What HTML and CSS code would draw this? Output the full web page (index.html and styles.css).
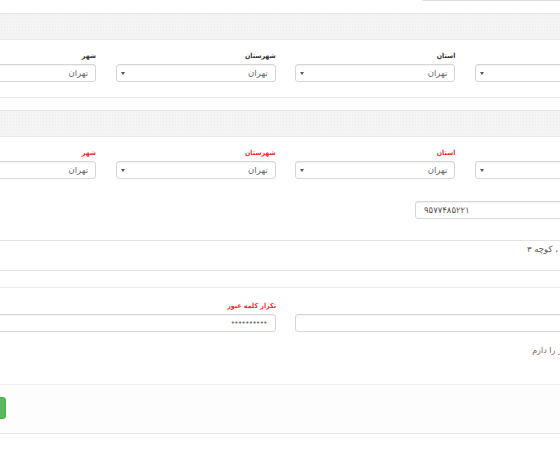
FILE: index.html
```html
<!DOCTYPE html>
<html lang="fa" dir="ltr">
<head>
<meta charset="utf-8">
<title>فرم ثبت نام</title>
<link rel="stylesheet" href="styles.css">
</head>
<body>
<div class="page">
  <div class="top-row"><div class="top-input"></div></div>

  <div class="band"></div>
  <div class="grid4 fields">
    <div class="field">
      <div class="label">&nbsp;</div>
      <div class="select"><span class="val"></span><span class="caret"></span></div>
    </div>
    <div class="field">
      <div class="label">استان</div>
      <div class="select"><span class="val">تهران</span><span class="caret"></span></div>
    </div>
    <div class="field">
      <div class="label">شهرستان</div>
      <div class="select"><span class="val">تهران</span><span class="caret"></span></div>
    </div>
    <div class="field">
      <div class="label">شهر</div>
      <div class="select"><span class="val">تهران</span><span class="caret"></span></div>
    </div>
  </div>
  <div class="hr hr-1"></div>

  <div class="band band-2"></div>
  <div class="grid4 fields">
    <div class="field">
      <div class="label req">&nbsp;</div>
      <div class="select"><span class="val"></span><span class="caret"></span></div>
    </div>
    <div class="field">
      <div class="label req">استان</div>
      <div class="select"><span class="val">تهران</span><span class="caret"></span></div>
    </div>
    <div class="field">
      <div class="label req">شهرستان</div>
      <div class="select"><span class="val">تهران</span><span class="caret"></span></div>
    </div>
    <div class="field">
      <div class="label req">شهر</div>
      <div class="select"><span class="val">تهران</span><span class="caret"></span></div>
    </div>
  </div>

  <div class="grid12 phone-row">
    <div class="col4"><div class="input ltr">۹۵۷۷۴۸۵۲۲۱</div></div>
  </div>

  <div class="address">تهران ، خیابان آزادی ، کوچه ۳</div>
  <div class="hr hr-2"></div>

  <div class="grid2 pass-row">
    <div class="field">
      <div class="label req">کلمه عبور</div>
      <div class="input"></div>
    </div>
    <div class="field">
      <div class="label req">تکرار کلمه عبور</div>
      <div class="input pass">••••••••••</div>
    </div>
  </div>

  <div class="check-row"><span class="box"></span><span class="check-text">قوانین سایت و مجوز را دارم</span></div>

  <div class="footer">
    <div class="btn">ثبت نام</div>
  </div>
</div>
</body>
</html>
```
FILE: styles.css
```css
html, body {
  margin: 0;
  padding: 0;
  background: #ffffff;
  overflow: hidden;
}
body {
  font-family: "DejaVu Sans", "Noto Sans", sans-serif;
  font-size: 8px;
  color: #555;
}
.page {
  width: 800px;
  margin-left: -120px;
  direction: rtl;
}
.top-row {
  padding: 0 45px 0 56px;
  display: flex;
}
.top-input {
  width: 212px;
  height: 16px;
  margin-top: -17px;
  border: 1px solid #dcdcdc;
  border-radius: 3px;
}
.band {
  margin-top: 12px;
  height: 25px;
  border-top: 1px solid #e6e6e6;
  border-bottom: 1px solid #e9e9e9;
  background-color: #f4f4f4;
  background-image: radial-gradient(circle, #ececec 0.6px, transparent 0.9px);
  background-size: 3px 3px;
}
.grid4 {
  display: grid;
  grid-template-columns: repeat(4, 160px);
  column-gap: 19.67px;
  padding: 0 45px 0 56px;
}
.fields {
  padding-top: 10px;
}
.label {
  height: 14px;
  line-height: 13px;
  font-family: "DejaVu Sans Condensed", "DejaVu Sans", sans-serif;
  font-stretch: condensed;
  font-weight: bold;
  color: #333;
  font-size: 7px;
  white-space: nowrap;
}
.label.req {
  color: #ee2f2f;
}
.select, .input {
  box-sizing: border-box;
  height: 18px;
  border: 1px solid #d6d6d6;
  border-radius: 3px;
  box-shadow: inset 0 1px 1px rgba(0,0,0,0.05);
  display: flex;
  align-items: center;
  justify-content: space-between;
  padding: 0 7px 0 4px;
  color: #666;
  font-size: 8.5px;
  white-space: nowrap;
}
.caret {
  width: 0;
  height: 0;
  border-top: 3px solid #555;
  border-left: 2px solid transparent;
  border-right: 2px solid transparent;
}
.hr {
  height: 0;
  border-top: 1px solid #e8e8e8;
}
.hr-1 {
  margin-top: 15px;
}
.band-2 {
  margin-top: 12px;
}
.grid12 {
  display: grid;
  grid-template-columns: 220px;
  padding: 0 45px 0 56px;
}
.phone-row {
  margin-top: 22px;
}
.input.ltr {
  direction: ltr;
  justify-content: flex-start;
  padding: 0 8px;
  color: #555;
}
.address {
  margin-top: 21px;
  height: 26px;
  border-top: 1px solid #e4e4e4;
  border-bottom: 1px solid #e4e4e4;
  padding: 3px 48px 0 0;
  line-height: 11px;
  color: #555;
  font-size: 8.5px;
  white-space: nowrap;
  overflow: hidden;
}
.hr-2 {
  margin-top: 16px;
  border-top: 1px solid #ebebeb;
}
.grid2 {
  display: grid;
  grid-template-columns: 340px 340px;
  column-gap: 19px;
  padding: 0 45px 0 56px;
}
.pass-row {
  padding-top: 12px;
}
.input.pass {
  justify-content: flex-start;
  padding: 0 8px;
  letter-spacing: -0.5px;
  color: #666;
  font-size: 7px;
}
.check-row {
  margin-top: 13px;
  height: 12px;
  line-height: 12px;
  display: flex;
  align-items: center;
  gap: 4px;
  padding-right: 40px;
  white-space: nowrap;
}
.box {
  width: 9px;
  height: 9px;
  border: 1px solid #999;
  border-radius: 2px;
  box-sizing: border-box;
}
.check-text {
  color: #7a6652;
  font-size: 8px;
}
.footer {
  margin-top: 27px;
  border-top: 1px solid #efefef;
  border-bottom: 1px solid #e6e6e6;
  box-shadow: 0 1px 1px rgba(0,0,0,0.04);
  background: #fdfdfd;
  padding: 12px 0 14px 0;
  display: flex;
  justify-content: flex-end;
}
.btn {
  box-sizing: border-box;
  width: 60px;
  height: 22px;
  margin-left: 66px;
  background: #5cb85c;
  border: 1px solid #4cae4c;
  border-radius: 3px;
  color: #fff;
  font-size: 9px;
  display: flex;
  align-items: center;
  justify-content: center;
}
```
